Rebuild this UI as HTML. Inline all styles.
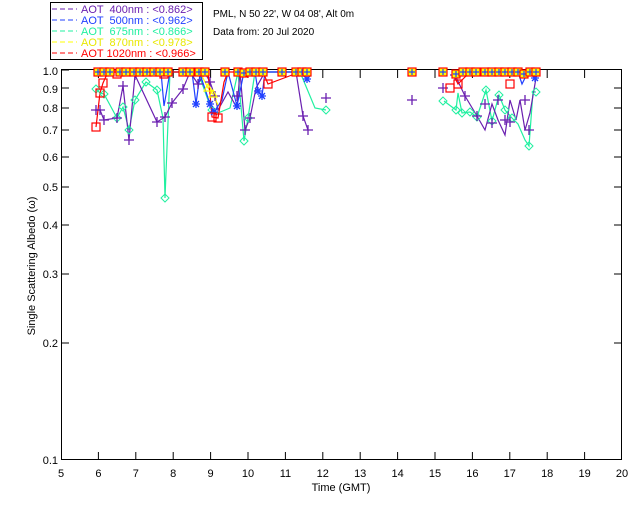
<!DOCTYPE html>
<html><head><meta charset="utf-8"><style>
html,body{margin:0;padding:0;background:#fff;}
svg{display:block;font-family:"Liberation Sans","DejaVu Sans",sans-serif;}
</style></head><body>
<svg width="640" height="512" viewBox="0 0 640 512" xmlns="http://www.w3.org/2000/svg">
<defs>
<g id="pl"><path d="M-5,0H5M0,-5V5" stroke="#6a1fb0" stroke-width="1.3"/></g>
<g id="dm"><path d="M0,-4L4,0L0,4L-4,0Z" fill="none" stroke="#20f0a0" stroke-width="1"/></g>
<g id="sq"><rect x="-4" y="-4" width="8" height="8" fill="#ffff00" stroke="#ff0000" stroke-width="1.2"/><path d="M-3,0H3M0,-3V3" stroke="#2040ff" stroke-width="1.2"/></g>
<g id="rs"><rect x="-4" y="-4" width="8" height="8" fill="none" stroke="#ff0000" stroke-width="1.2"/></g>
<g id="as"><path d="M-4,0H4M0,-4V4M-3,-3L3,3M-3,3L3,-3" stroke="#2040ff" stroke-width="1.3"/></g>
<g id="ye"><path d="M0,-4L4,3H-4Z" fill="none" stroke="#ffff00" stroke-width="1.2"/></g>
</defs>
<rect x="50.5" y="2.5" width="152" height="57" fill="none" stroke="#000"/>
<g font-size="11">
<line x1="52" y1="9" x2="77" y2="9" stroke="#6a1fb0" stroke-dasharray="5,3"/><text x="81" y="13" fill="#6a1fb0">AOT &#160;400nm : &lt;0.862&gt;</text>
<line x1="52" y1="20" x2="77" y2="20" stroke="#2040ff" stroke-dasharray="5,3"/><text x="81" y="24" fill="#2040ff">AOT &#160;500nm : &lt;0.962&gt;</text>
<line x1="52" y1="31" x2="77" y2="31" stroke="#20f0a0" stroke-dasharray="5,3"/><text x="81" y="35" fill="#20f0a0">AOT &#160;675nm : &lt;0.866&gt;</text>
<line x1="52" y1="42" x2="77" y2="42" stroke="#ffff00" stroke-dasharray="5,3"/><text x="81" y="46" fill="#e8e800">AOT &#160;870nm : &lt;0.978&gt;</text>
<line x1="52" y1="53" x2="77" y2="53" stroke="#ff0000" stroke-dasharray="5,3"/><text x="81" y="57" fill="#ff0000">AOT 1020nm : &lt;0.966&gt;</text>
</g>
<text x="213" y="17" font-size="10">PML, N 50 22', W 04 08', Alt 0m</text>
<text x="213" y="35" font-size="10">Data from: 20 Jul 2020</text>
<rect x="61.5" y="69.5" width="560" height="390" fill="none" stroke="#000"/>
<g stroke="#000">
<path d="M61,70h8M61,88h8M61,108h8M61,130h8M61,157h8M61,187h8M61,225h8M61,274h8M61,343h8"/>
<path d="M622,88h-8M622,108h-8M622,130h-8M622,157h-8M622,187h-8M622,225h-8M622,274h-8M622,343h-8"/>
<path d="M98.4,460v-8M135.8,460v-8M173.2,460v-8M210.6,460v-8M248,460v-8M285.4,460v-8M322.8,460v-8M360.2,460v-8M397.6,460v-8M435,460v-8M472.4,460v-8M509.8,460v-8M547.2,460v-8M584.6,460v-8"/>
<path d="M98.4,70v8M135.8,70v8M173.2,70v8M210.6,70v8M248,70v8M285.4,70v8M322.8,70v8M360.2,70v8M397.6,70v8M435,70v8M472.4,70v8M509.8,70v8M547.2,70v8M584.6,70v8"/>
</g>
<g font-size="11" text-anchor="end">
<text x="58" y="75">1.0</text><text x="58" y="93">0.9</text><text x="58" y="112">0.8</text><text x="58" y="134">0.7</text><text x="58" y="161">0.6</text><text x="58" y="191">0.5</text><text x="58" y="229">0.4</text><text x="58" y="278">0.3</text><text x="58" y="347">0.2</text><text x="58" y="464">0.1</text>
</g>
<g font-size="11" text-anchor="middle">
<text x="61" y="477">5</text><text x="98.4" y="477">6</text><text x="135.8" y="477">7</text><text x="173.2" y="477">8</text><text x="210.6" y="477">9</text><text x="248" y="477">10</text><text x="285.4" y="477">11</text><text x="322.8" y="477">12</text><text x="360.2" y="477">13</text><text x="397.6" y="477">14</text><text x="435" y="477">15</text><text x="472.4" y="477">16</text><text x="509.8" y="477">17</text><text x="547.2" y="477">18</text><text x="584.6" y="477">19</text><text x="622" y="477">20</text>
<text x="341" y="491">Time (GMT)</text>
</g>
<text transform="translate(35,266) rotate(-90)" font-size="11" text-anchor="middle">Single Scattering Albedo (ω)</text>
<g fill="none" stroke-width="1.2">
<polyline stroke="#20f0a0" points="96,89 100,93 104,94 117,118 123,107 129,130 135,100 146,82 157,90 163,118 165,198 170,72 185,72 198,72 208,100 212,110 218,113 230,108 238,72 244,141 248,118 255,72 270,72 290,72 300,72 315,108 326,110"/>
<polyline stroke="#20f0a0" points="444,101 456,110 458,93 462,113 470,112 477,117 486,90 492,121 499,95 505,110 512,118 518,124 525,140 529,146 533,92 536,92"/>
<polyline stroke="#6a1fb0" points="96,110 100,110 104,120 117,118 123,86 129,140 135,75 157,122 165,117 172,103 183,89 190,72 198,84 205,73 210,82 215,96 218,110 228,92 237,108 240,72 245,130 250,118 256,88 265,72 296,72 303,116 308,130"/>
<polyline stroke="#6a1fb0" points="455,75 465,96 477,116 485,130 492,104 498,120 505,135 510,100 516,120 520,100 525,130 530,113 536,78"/>
<polyline stroke="#2040ff" points="100,72 128,72 161,72 164,106 170,72 192,72 196,104 200,74 210,104 214,112 222,100 228,72 237,106 244,72 255,72 258,91 262,96 265,72 300,72 307,79"/>
<polyline stroke="#2040ff" points="454,72 518,72 522,84 528,72 535,78"/>
<polyline stroke="#ffff00" points="200,72 208,88 213,94 218,105"/>
<polyline stroke="#ff0000" points="96,127 100,93 103,83 108,72 178,72 208,72 212,117 218,118 224,82 228,72 263,72 268,84 300,72"/>
<polyline stroke="#ff0000" points="452,72 458,84 470,72 520,72 528,73"/>
</g>
<g>
<use href="#dm" x="96" y="89"/><use href="#dm" x="104" y="94"/><use href="#dm" x="117" y="118"/><use href="#dm" x="123" y="107"/><use href="#dm" x="129" y="130"/><use href="#dm" x="135" y="100"/><use href="#dm" x="146" y="82"/><use href="#dm" x="157" y="90"/><use href="#dm" x="165" y="198"/><use href="#dm" x="212" y="110"/><use href="#dm" x="244" y="141"/><use href="#dm" x="248" y="118"/><use href="#dm" x="326" y="110"/><use href="#dm" x="443" y="101"/><use href="#dm" x="456" y="110"/><use href="#dm" x="462" y="113"/><use href="#dm" x="470" y="112"/><use href="#dm" x="477" y="117"/><use href="#dm" x="486" y="90"/><use href="#dm" x="492" y="121"/><use href="#dm" x="499" y="95"/><use href="#dm" x="505" y="110"/><use href="#dm" x="512" y="118"/><use href="#dm" x="529" y="146"/><use href="#dm" x="536" y="92"/>
<use href="#pl" x="96" y="110"/><use href="#pl" x="100" y="110"/><use href="#pl" x="104" y="120"/><use href="#pl" x="117" y="118"/><use href="#pl" x="123" y="86"/><use href="#pl" x="129" y="140"/><use href="#pl" x="135" y="75"/><use href="#pl" x="157" y="122"/><use href="#pl" x="165" y="117"/><use href="#pl" x="172" y="103"/><use href="#pl" x="183" y="89"/><use href="#pl" x="198" y="84"/><use href="#pl" x="210" y="82"/><use href="#pl" x="215" y="96"/><use href="#pl" x="237" y="96"/><use href="#pl" x="245" y="130"/><use href="#pl" x="250" y="118"/><use href="#pl" x="303" y="116"/><use href="#pl" x="308" y="130"/><use href="#pl" x="326" y="98"/><use href="#pl" x="412" y="100"/><use href="#pl" x="443" y="88"/><use href="#pl" x="455" y="75"/><use href="#pl" x="465" y="96"/><use href="#pl" x="477" y="116"/><use href="#pl" x="485" y="104"/><use href="#pl" x="492" y="123"/><use href="#pl" x="498" y="100"/><use href="#pl" x="505" y="120"/><use href="#pl" x="510" y="122"/><use href="#pl" x="525" y="100"/><use href="#pl" x="529" y="130"/>
<use href="#as" x="196" y="104"/><use href="#as" x="210" y="104"/><use href="#as" x="214" y="112"/><use href="#as" x="237" y="106"/><use href="#as" x="258" y="91"/><use href="#as" x="262" y="96"/><use href="#as" x="307" y="79"/><use href="#as" x="535" y="78"/>
<use href="#ye" x="208" y="88"/><use href="#ye" x="213" y="94"/>
<use href="#rs" x="96" y="127"/><use href="#rs" x="100" y="93"/><use href="#rs" x="103" y="83"/><use href="#rs" x="117" y="74"/><use href="#rs" x="164" y="74"/><use href="#rs" x="212" y="117"/><use href="#rs" x="218" y="118"/><use href="#rs" x="268" y="84"/><use href="#rs" x="458" y="84"/><use href="#rs" x="450" y="88"/><use href="#rs" x="510" y="84"/>
<use href="#sq" x="98" y="72"/><use href="#sq" x="104" y="72"/><use href="#sq" x="110" y="72"/><use href="#sq" x="120" y="72"/><use href="#sq" x="126" y="72"/><use href="#sq" x="134" y="72"/><use href="#sq" x="140" y="72"/><use href="#sq" x="147" y="72"/><use href="#sq" x="154" y="72"/><use href="#sq" x="160" y="72"/><use href="#sq" x="168" y="72"/><use href="#sq" x="183" y="72"/><use href="#sq" x="190" y="72"/><use href="#sq" x="199" y="72"/><use href="#sq" x="205" y="72"/><use href="#sq" x="225" y="72"/><use href="#sq" x="238" y="72"/><use href="#sq" x="244" y="73"/><use href="#sq" x="250" y="72"/><use href="#sq" x="256" y="72"/><use href="#sq" x="263" y="72"/><use href="#sq" x="282" y="72"/><use href="#sq" x="296" y="72"/><use href="#sq" x="302" y="72"/><use href="#sq" x="307" y="72"/><use href="#sq" x="412" y="72"/><use href="#sq" x="443" y="72"/><use href="#sq" x="456" y="74"/><use href="#sq" x="463" y="72"/><use href="#sq" x="470" y="72"/><use href="#sq" x="476" y="72"/><use href="#sq" x="485" y="72"/><use href="#sq" x="492" y="72"/><use href="#sq" x="499" y="72"/><use href="#sq" x="505" y="72"/><use href="#sq" x="512" y="72"/><use href="#sq" x="518" y="72"/><use href="#sq" x="524" y="74"/><use href="#sq" x="530" y="72"/><use href="#sq" x="536" y="72"/>
</g>
</svg>
</body></html>
